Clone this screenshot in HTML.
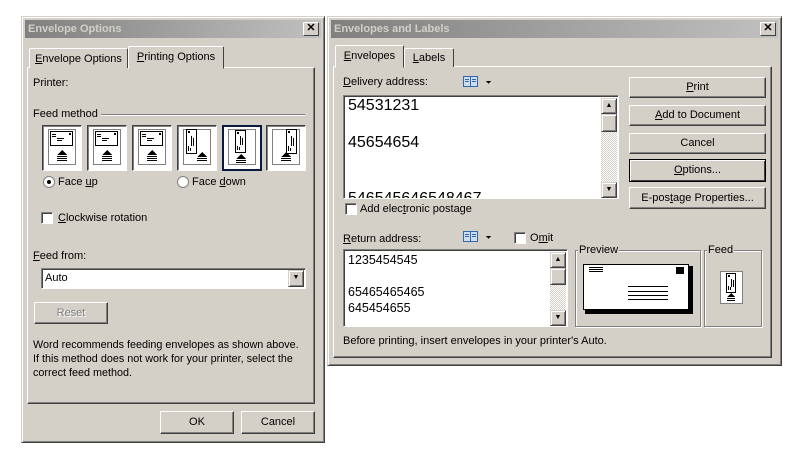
<!DOCTYPE html>
<html><head><style>
*{margin:0;padding:0;box-sizing:border-box}
body{width:800px;height:458px;background:#fff;position:relative;overflow:hidden;font-family:"Liberation Sans",Tahoma,sans-serif;font-size:11px;color:#000}
.a{position:absolute}
.dlg{position:absolute;background:#d4d0c8;border:1px solid;border-color:#d4d0c8 #404040 #404040 #d4d0c8;box-shadow:inset 1px 1px #fff,inset -1px -1px #808080}
.title{position:absolute;left:3px;right:3px;top:3px;height:18px;background:linear-gradient(90deg,#808080,#c0c0c0);color:#d4d0c8;font-weight:bold;font-size:11px;line-height:18px;padding-left:3px}
.x{position:absolute;right:2px;top:2px;width:16px;height:14px;background:#d4d0c8;border:1px solid;border-color:#fff #404040 #404040 #fff;font-size:11px;line-height:11px;text-align:center;color:#000}
.raised{position:absolute;background:#d4d0c8;border:1px solid;border-color:#fff #404040 #404040 #fff;box-shadow:inset -1px -1px #808080;text-align:center}
.sunk{position:absolute;background:#fff;border:1px solid;border-color:#808080 #fff #fff #808080;box-shadow:inset 1px 1px #404040}
.panel{position:absolute;border:1px solid;border-color:#fff #404040 #404040 #fff;box-shadow:inset -1px -1px #808080}
.tab{position:absolute;background:#d4d0c8;border:1px solid;border-bottom:none;border-color:#fff #404040 #404040 #fff;border-radius:2px 2px 0 0;text-align:center;line-height:18px}
.cb{position:absolute;width:12px;height:12px;background:#fff;border:1px solid;border-color:#808080 #fff #fff #808080;box-shadow:inset 1px 1px #404040}
.sb{position:absolute;width:16px;background:repeating-conic-gradient(#d4d0c8 0 25%,#fff 0 50%) 0 0/2px 2px}
.arr{position:absolute;left:0;width:16px;height:16px;background:#d4d0c8;border:1px solid;border-color:#d4d0c8 #404040 #404040 #d4d0c8;box-shadow:inset 1px 1px #fff,inset -1px -1px #808080;font-size:7px;line-height:14px;text-align:center}
.grp{position:absolute;border:1px solid #808080;box-shadow:1px 1px #fff,inset 1px 1px #fff}
.gl{position:absolute;top:-7px;background:#d4d0c8;padding:0 1px}
u{text-decoration:underline}
svg{shape-rendering:crispEdges}
.fb{position:absolute;top:125px;width:40px;height:46px;background:#fff;border:1px solid;border-color:#404040 #fff #fff #404040;box-shadow:inset 1px 1px #808080}
</style></head><body>

<div class="dlg" style="left:21px;top:16px;width:304px;height:427px">
 <div class="title">Envelope Options<div class="x">✕</div></div>
</div>
<div class="panel" style="left:27px;top:67px;width:288px;height:337px"></div>
<div class="tab" style="left:29px;top:48px;width:99px;height:20px;padding-top:1px"><u>E</u>nvelope Options</div>
<div class="tab" style="left:128px;top:46px;width:96px;height:23px;padding-top:1px;border-bottom:1px solid #d4d0c8"><u>P</u>rinting Options</div>
<div class="a" style="left:33px;top:77px">Printer:</div>
<div class="a" style="left:33px;top:108px">Feed method</div>
<div class="a" style="left:101px;top:114px;width:204px;height:2px;border-top:1px solid #808080;border-bottom:1px solid #fff"></div>

<svg class="a" style="left:0;top:0" width="0" height="0"><defs>
<g id="h"><rect x="7.5" y="5.5" width="22" height="14" fill="#fff" stroke="#000"/><rect x="26" y="7" width="2" height="2"/><path d="M9 8.5h4M9 10.5h4M14 12.5h7M14 14.5h5" stroke="#000" fill="none"/><rect x="5.5" y="3.5" width="27" height="35" fill="none" stroke="#808080"/><path d="M19 24l-5 5h10z" fill="#000"/><path d="M14 30.5h10M14 32.5h10M14 34.5h10" stroke="#000" fill="none"/></g>
</defs></svg>

<div class="fb" style="left:42px"><svg width="38" height="44"><use href="#h"/></svg></div>
<div class="fb" style="left:87px"><svg width="38" height="44"><use href="#h"/></svg></div>
<div class="fb" style="left:132px"><svg width="38" height="44"><use href="#h"/></svg></div>
<div class="fb" style="left:177px"><svg width="38" height="44"><rect x="5.5" y="3.5" width="27" height="35" fill="none" stroke="#808080"/><rect x="8.5" y="3.5" width="10" height="24" fill="#fff" stroke="#000"/><rect x="10" y="5" width="2" height="2"/><path d="M13.5 10v10M15.5 12v8M10.5 20v5M12.5 22v3" stroke="#000" fill="none"/><path d="M24 26l-5 5h10z"/><path d="M19 32.5h10M19 34.5h10" stroke="#000" fill="none"/></svg></div>
<div class="fb" style="left:222px;border:2px solid #0a1a40;box-shadow:none"><svg width="36" height="42"><rect x="4.5" y="2.5" width="27" height="35" fill="none" stroke="#808080"/><rect x="11.5" y="3.5" width="10" height="22" fill="#fff" stroke="#000"/><rect x="13" y="5" width="2" height="2"/><path d="M16.5 9v9M18.5 11v7M13.5 19v4M15.5 20v3" stroke="#000" fill="none"/><path d="M17 27l-5 5h10z"/><path d="M12 33.5h10M12 35.5h10" stroke="#000" fill="none"/></svg></div>
<div class="fb" style="left:266px"><svg width="38" height="44"><rect x="5.5" y="3.5" width="27" height="35" fill="none" stroke="#808080"/><rect x="19.5" y="3.5" width="10" height="24" fill="#fff" stroke="#000"/><rect x="21" y="5" width="2" height="2"/><path d="M24.5 10v10M26.5 12v8M21.5 20v5M23.5 22v3" stroke="#000" fill="none"/><path d="M19 26l-5 5h10z"/><path d="M14 32.5h10M14 34.5h10" stroke="#000" fill="none"/></svg></div>

<div class="a" style="left:43px;top:176px;width:12px;height:12px;border-radius:50%;background:#fff;border:1px solid #808080"><div style="position:absolute;left:3px;top:3px;width:4px;height:4px;border-radius:50%;background:#000"></div></div>
<div class="a" style="left:58px;top:176px">Face <u>u</u>p</div>
<div class="a" style="left:177px;top:176px;width:12px;height:12px;border-radius:50%;background:#fff;border:1px solid #808080"></div>
<div class="a" style="left:192px;top:176px">Face <u>d</u>own</div>
<div class="cb" style="left:41px;top:212px"></div>
<div class="a" style="left:58px;top:212px"><u>C</u>lockwise rotation</div>
<div class="a" style="left:33px;top:250px"><u>F</u>eed from:</div>
<div class="sunk" style="left:41px;top:268px;width:265px;height:21px"><span class="a" style="left:3px;top:3px">Auto</span><div class="arr" style="left:auto;right:1px;top:1px;height:17px">▼</div></div>
<div class="raised" style="left:34px;top:302px;width:74px;height:22px;line-height:20px;color:#808080;text-shadow:1px 1px #fff">Reset</div>
<div class="a" style="left:33px;top:338px;line-height:14px;width:285px;font-size:10.8px">Word recommends feeding envelopes as shown above.<br>If this method does not work for your printer, select the<br>correct feed method.</div>
<div class="raised" style="left:160px;top:411px;width:74px;height:23px;line-height:21px">OK</div>
<div class="raised" style="left:241px;top:411px;width:74px;height:23px;line-height:21px">Cancel</div>

<div class="dlg" style="left:327px;top:16px;width:455px;height:350px">
 <div class="title">Envelopes and Labels<div class="x">✕</div></div>
</div>
<div class="panel" style="left:333px;top:66px;width:439px;height:292px"></div>
<div class="tab" style="left:335px;top:45px;width:69px;height:23px;padding-top:1px;border-bottom:1px solid #d4d0c8"><u>E</u>nvelopes</div>
<div class="tab" style="left:404px;top:48px;width:50px;height:19px;padding-top:0"><u>L</u>abels</div>
<div class="a" style="left:343px;top:76px"><u>D</u>elivery address:</div>
<svg class="a" style="left:463px;top:76px" width="30" height="12"><rect x="0.5" y="0.5" width="14" height="10" fill="#cde" stroke="#36a"/><path d="M7.5 1v9" stroke="#36a"/><path d="M2 3.5h4M9 3.5h4M2 5.5h4M9 5.5h4" stroke="#36a"/><path d="M23 5h5l-2.5 3z"/></svg>
<div class="sunk" style="left:343px;top:95px;width:276px;height:104px;overflow:hidden">
 <div class="a" style="left:4px;top:1px;font-size:16px;line-height:18.5px">54531231<br><br>45654654<br><br><br>546545646548467</div>
 <div class="sb" style="top:2px;height:100px;right:1px"><div class="arr" style="top:0">▲</div><div class="arr" style="top:16px;height:18px"></div><div class="arr" style="top:84px">▼</div></div>
</div>
<div class="cb" style="left:345px;top:203px"></div>
<div class="a" style="left:360px;top:203px">Add elec<u>t</u>ronic postage</div>
<div class="raised" style="left:629px;top:77px;width:137px;height:21px;line-height:19px"><u>P</u>rint</div>
<div class="raised" style="left:629px;top:105px;width:137px;height:21px;line-height:19px"><u>A</u>dd to Document</div>
<div class="raised" style="left:629px;top:133px;width:137px;height:21px;line-height:19px">Cancel</div>
<div class="raised" style="left:629px;top:159px;width:137px;height:23px;line-height:21px;border:1px solid #000;box-shadow:inset 1px 1px #fff,inset -1px -1px #404040"><u>O</u>ptions...</div>
<div class="raised" style="left:629px;top:187px;width:137px;height:22px;line-height:20px">E-pos<u>t</u>age Properties...</div>
<div class="a" style="left:343px;top:233px"><u>R</u>eturn address:</div>
<svg class="a" style="left:463px;top:231px" width="30" height="12"><rect x="0.5" y="0.5" width="14" height="10" fill="#cde" stroke="#36a"/><path d="M7.5 1v9" stroke="#36a"/><path d="M2 3.5h4M9 3.5h4M2 5.5h4M9 5.5h4" stroke="#36a"/><path d="M23 5h5l-2.5 3z"/></svg>
<div class="cb" style="left:514px;top:232px"></div>
<div class="a" style="left:530px;top:232px">O<u>m</u>it</div>
<div class="sunk" style="left:343px;top:249px;width:225px;height:78px;overflow:hidden">
 <div class="a" style="left:4px;top:2px;font-size:12.5px;line-height:16px">1235454545<br><br>65465465465<br>645454655</div>
 <div class="sb" style="right:1px;top:2px;height:74px"><div class="arr" style="top:0">▲</div><div class="arr" style="top:16px;height:17px"></div><div class="arr" style="top:58px">▼</div></div>
</div>
<div class="grp" style="left:575px;top:250px;width:126px;height:77px"><span class="gl" style="left:2px">Preview</span></div>
<div class="a" style="left:585px;top:266px;width:108px;height:48px;background:#000"></div>
<div class="a" style="left:583px;top:264px;width:106px;height:46px;background:#fff;border:1px solid #000">
 <div class="a" style="left:5px;top:2px;width:14px;height:5px;border-top:1px solid #000;border-bottom:1px solid #000"></div>
 <div class="a" style="left:5px;top:4px;width:14px;height:1px;background:#000"></div>
 <div class="a" style="right:4px;top:2px;width:8px;height:7px;background:#000"></div>
 <div class="a" style="left:44px;top:21px;width:40px;height:14px;border-top:1px solid #000;border-bottom:1px solid #000"></div>
 <div class="a" style="left:44px;top:26px;width:40px;height:1px;background:#000"></div>
 <div class="a" style="left:44px;top:30px;width:40px;height:1px;background:#000"></div>
</div>
<div class="grp" style="left:704px;top:250px;width:58px;height:77px"><span class="gl" style="left:2px">Feed</span></div>
<svg class="a" style="left:720px;top:271px" width="23" height="34"><rect x="0.5" y="0.5" width="22" height="32" fill="#fff" stroke="#808080"/><rect x="6.5" y="2.5" width="9" height="19" fill="#fff" stroke="#000"/><rect x="8" y="4" width="2" height="2"/><path d="M11.5 8v8M13.5 9v7M8.5 15v4M10.5 16v3" stroke="#000" fill="none"/><path d="M11 22l-4 4h8z"/><path d="M7 27.5h8M7 29.5h8" stroke="#000" fill="none"/></svg>
<div class="a" style="left:343px;top:335px">Before printing, insert envelopes in your printer's Auto.</div>
</body></html>
